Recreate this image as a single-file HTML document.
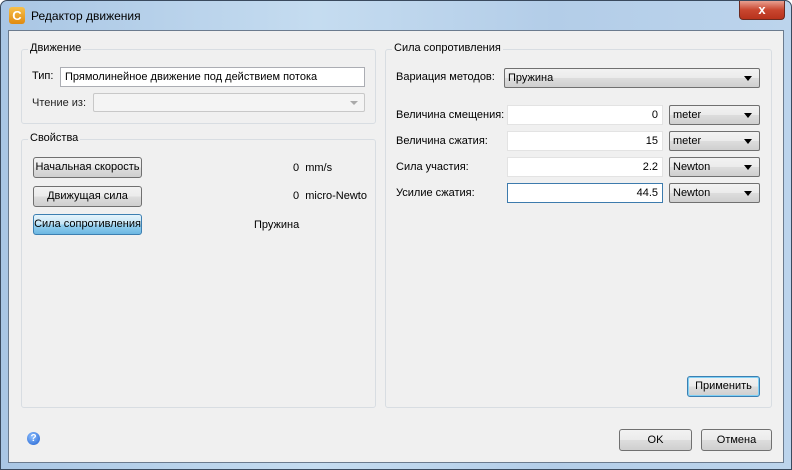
<!DOCTYPE html><html><head><meta charset="utf-8"><style>
*{box-sizing:border-box}body{margin:0;width:792px;height:470px;overflow:hidden;font-family:"Liberation Sans","Noto Sans CJK SC",sans-serif;font-size:11px;color:#000;background:#fff;white-space:nowrap}
.win{position:absolute;left:0;top:0;width:792px;height:470px;background:linear-gradient(90deg,#a9c6e4,#c5dcf0 40%,#b3cde8 70%,#bcd4ec);border:1px solid #3a4a5e;border-radius:7px 7px 0 0}
.client{position:absolute;left:7px;top:29px;width:776px;height:433px;background:#f0f0f0;border:1px solid #6b7b8e}
.a{position:absolute}
.grp{position:absolute;border:1px solid #d8dde2;border-radius:3px}
.gl{position:absolute;background:#f0f0f0;padding:0 2px;top:-8px;left:6px}
.in{position:absolute;background:#fff;border:1px solid #abadb3;height:20px;padding:3px 4px;text-align:right;overflow:hidden}
.cb{position:absolute;border:1px solid #707070;border-radius:2px;background:linear-gradient(#f2f2f2,#ebebeb 50%,#dddddd 51%,#cfcfcf);height:20px;padding:3px 3px}
.cb:after{content:"";position:absolute;right:7px;top:7px;border-left:4px solid transparent;border-right:4px solid transparent;border-top:5px solid #000}
.btn{position:absolute;border:1px solid #707070;border-radius:3px;background:linear-gradient(#f2f2f2,#ebebeb 50%,#dddddd 51%,#cfcfcf);text-align:center;line-height:18px;overflow:hidden}
</style></head><body>
<div class="win">
<div class="a" style="left:8px;top:6px;width:16px;height:17px;border-radius:3px;background:linear-gradient(#f7c04a,#e08a10);color:#fff;font-weight:bold;font-size:13px;text-align:center;line-height:17px">C</div>
<div class="a" style="left:30px;top:8px;font-size:12px">Редактор движения</div>
<div class="a" style="left:738px;top:0;width:46px;height:19px;border:1px solid #6b2a20;border-top:none;border-radius:0 0 4px 4px;background:linear-gradient(#e8a090,#c9462f 50%,#b8331c);color:#fff;text-align:center;font-weight:bold;font-size:13px;line-height:18px">x</div>
<div class="client"></div>
<div class="grp" style="left:20px;top:48px;width:355px;height:75px"><span class="gl">Движение</span></div>
<div class="a" style="left:31px;top:69px">Тип:</div>
<div class="in" style="left:59px;top:66px;width:305px;text-align:left">Прямолинейное движение под действием потока</div>
<div class="a" style="left:31px;top:96px;color:#222">Чтение из:</div>
<div class="a" style="left:92px;top:92px;width:272px;height:19px;border:1px solid #c8c8c8;border-radius:2px;background:#f4f4f4"><div class="a" style="right:6px;top:7px;border-left:4px solid transparent;border-right:4px solid transparent;border-top:4px solid #aaa"></div></div>
<div class="grp" style="left:20px;top:138px;width:355px;height:269px"><span class="gl">Свойства</span></div>
<div class="btn" style="left:32px;top:156px;width:109px;height:21px">Начальная скорость</div>
<div class="btn" style="left:32px;top:185px;width:109px;height:21px">Движущая сила</div>
<div class="btn" style="left:32px;top:213px;width:109px;height:21px;border-color:#3c7fb1;background:linear-gradient(#e5f4fc,#c4e5f6 50%,#98d1ef 51%,#6cb7e2)">Сила сопротивления</div>
<div class="a" style="left:292px;top:161px">0&nbsp; mm/s</div>
<div class="a" style="left:292px;top:189px">0&nbsp; micro-Newto</div>
<div class="a" style="left:253px;top:218px">Пружина</div>
<div class="grp" style="left:384px;top:48px;width:387px;height:359px"><span class="gl">Сила сопротивления</span></div>
<div class="a" style="left:395px;top:70px">Вариация методов:</div>
<div class="cb" style="left:503px;top:67px;width:256px">Пружина</div>
<div class="a" style="left:395px;top:108px">Величина смещения:</div>
<div class="a" style="left:395px;top:134px">Величина сжатия:</div>
<div class="a" style="left:395px;top:160px">Сила участия:</div>
<div class="a" style="left:395px;top:186px">Усилие сжатия:</div>
<div class="in" style="left:506px;top:104px;width:156px;border-color:#e3e3e3">0</div>
<div class="in" style="left:506px;top:130px;width:156px;border-color:#e3e3e3">15</div>
<div class="in" style="left:506px;top:156px;width:156px;border-color:#e3e3e3">2.2</div>
<div class="in" style="left:506px;top:182px;width:156px;border-color:#3d7bad">44.5</div>
<div class="cb" style="left:668px;top:104px;width:91px">meter</div>
<div class="cb" style="left:668px;top:130px;width:91px">meter</div>
<div class="cb" style="left:668px;top:156px;width:91px">Newton</div>
<div class="cb" style="left:668px;top:182px;width:91px">Newton</div>
<div class="btn" style="left:686px;top:375px;width:73px;height:21px;border-color:#3c7fb1;box-shadow:inset 0 0 0 1px #7fd0f5">Применить</div>
<div class="a" style="left:26px;top:431px;width:13px;height:13px;border-radius:50%;background:radial-gradient(circle at 40% 35%,#8fc0ff,#1d5fcf);color:#fff;font-size:10px;font-weight:bold;text-align:center;line-height:13px">?</div>
<div class="btn" style="left:618px;top:428px;width:73px;height:22px;line-height:20px">OK</div>
<div class="btn" style="left:700px;top:428px;width:71px;height:22px;line-height:20px">Отмена</div>
</div>
</body></html>
